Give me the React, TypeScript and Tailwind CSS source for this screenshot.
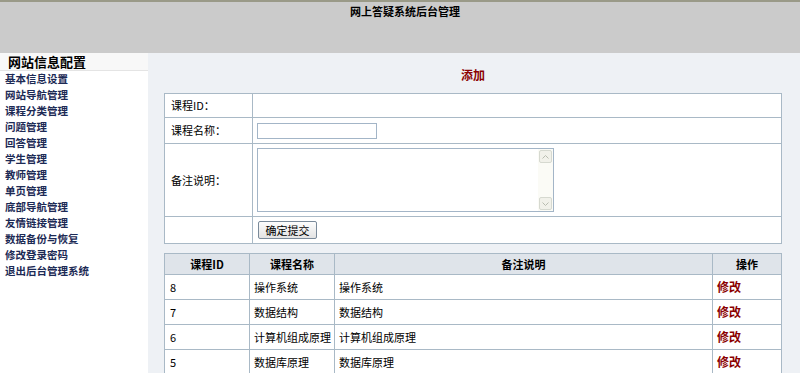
import React from 'react';

const menu = [
  '基本信息设置',
  '网站导航管理',
  '课程分类管理',
  '问题管理',
  '回答管理',
  '学生管理',
  '教师管理',
  '单页管理',
  '底部导航管理',
  '友情链接管理',
  '数据备份与恢复',
  '修改登录密码',
  '退出后台管理系统',
];

const courses = [
  { id: 8, name: '操作系统', note: '操作系统' },
  { id: 7, name: '数据结构', note: '数据结构' },
  { id: 6, name: '计算机组成原理', note: '计算机组成原理' },
  { id: 5, name: '数据库原理', note: '数据库原理' },
];

function Arrow({ up }: { up?: boolean }) {
  return (
    <div className="w-[13px] h-[13px] border border-[#d6d9d0] rounded-[2px] bg-[#f1f1ea] flex items-center justify-center">
      <svg width="7" height="4" viewBox="0 0 7 4">
        <path d={up ? 'M0.5 3.5 L3.5 0.5 L6.5 3.5' : 'M0.5 0.5 L3.5 3.5 L6.5 0.5'} fill="none" stroke="#b8bcb0" strokeWidth="1" />
      </svg>
    </div>
  );
}

export default function App() {
  return (
    <div
      className="w-[800px] h-[373px] overflow-hidden bg-[#eef1f5] text-black"
      style={{ fontFamily: '"Noto Sans CJK SC", "Liberation Sans", sans-serif' }}
    >
      {/* Header */}
      <div className="h-[53px] bg-[#cbcbcb] border-t-2 border-[#9a9a88] flex justify-center">
        <div className="pl-[10px] pt-[1px] text-[11px] font-bold leading-[16px]">网上答疑系统后台管理</div>
      </div>

      <div className="flex">
        {/* Sidebar */}
        <div className="w-[148px] shrink-0 bg-white h-[320px]">
          <div className="h-[18px] bg-[#f8f8f8] border-b border-[#e4e4e4] pl-[8px] text-[13px] font-bold leading-[18px]">
            网站信息配置
          </div>
          <ul>
            {menu.map((m) => (
              <li key={m} className="h-[16px] pl-[5px] text-[10.5px] font-bold leading-[16px] text-[#1c2a55]">
                {m}
              </li>
            ))}
          </ul>
        </div>

        {/* Content */}
        <div className="flex-1 pl-[16px] pt-[12px]">
          <div className="w-[618px] h-[20px] text-center text-[12px] font-bold leading-[20px] text-[#8b0000]">添加</div>

          <table className="mt-[8px] w-[618px] border-collapse bg-white text-[11px]">
            <tbody>
              <tr className="h-[24px]">
                <td className="w-[88px] border border-[#a9b9c6] pl-[6px]">课程ID：</td>
                <td className="border border-[#a9b9c6]"></td>
              </tr>
              <tr className="h-[26px]">
                <td className="border border-[#a9b9c6] pl-[6px]">课程名称：</td>
                <td className="border border-[#a9b9c6] pl-[4px]">
                  <input className="block w-[120px] h-[16px] border border-[#a3b5c7] bg-white" />
                </td>
              </tr>
              <tr className="h-[73px]">
                <td className="border border-[#a9b9c6] pl-[6px]">备注说明：</td>
                <td className="border border-[#a9b9c6] pl-[4px]">
                  <div className="flex w-[297px] h-[64px] border border-[#a3b5c7] bg-white">
                    <textarea className="flex-1 h-full resize-none outline-none overflow-hidden"></textarea>
                    <div className="w-[15px] h-full bg-[#fbfbf6] flex flex-col justify-between items-center py-[1px]">
                      <Arrow up />
                      <Arrow />
                    </div>
                  </div>
                </td>
              </tr>
              <tr className="h-[27px]">
                <td className="border border-[#a9b9c6]"></td>
                <td className="border border-[#a9b9c6] pl-[5px]">
                  <button className="block w-[59px] h-[18px] border border-[#7a8a9a] rounded-[2px] bg-gradient-to-b from-[#fdfdfd] to-[#e3e3e3] text-[11px] leading-[16px]">
                    确定提交
                  </button>
                </td>
              </tr>
            </tbody>
          </table>

          <table className="mt-[9px] w-[618px] border-collapse bg-white text-[11px]">
            <thead>
              <tr className="h-[21px] bg-[#dfe4ea] font-bold">
                <th className="w-[85px] border border-[#a9b9c6]">课程ID</th>
                <th className="w-[85px] border border-[#a9b9c6]">课程名称</th>
                <th className="border border-[#a9b9c6]">备注说明</th>
                <th className="w-[69px] border border-[#a9b9c6]">操作</th>
              </tr>
            </thead>
            <tbody>
              {courses.map((c) => (
                <tr key={c.id} className="h-[25px]">
                  <td className="border border-[#a9b9c6] pl-[5px]">{c.id}</td>
                  <td className="border border-[#a9b9c6] pl-[4px]">{c.name}</td>
                  <td className="border border-[#a9b9c6] pl-[4px]">{c.note}</td>
                  <td className="border border-[#a9b9c6] pl-[4px] text-[12px] font-bold text-[#8b0000]">修改</td>
                </tr>
              ))}
            </tbody>
          </table>
        </div>
      </div>
    </div>
  );
}
